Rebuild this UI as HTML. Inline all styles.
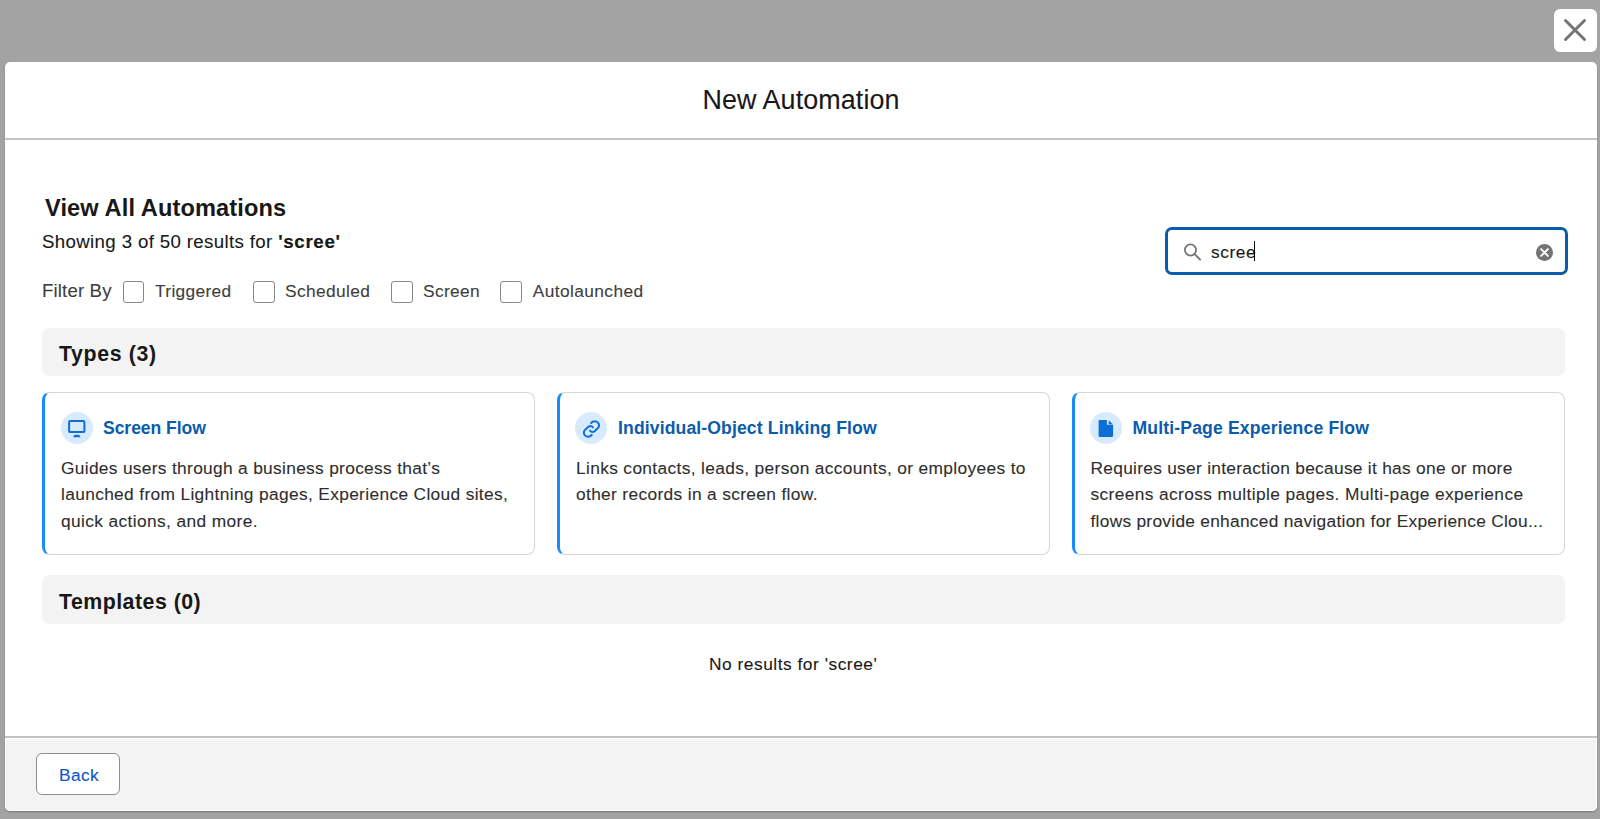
<!DOCTYPE html>
<html><head><meta charset="utf-8">
<style>
*{box-sizing:border-box;margin:0;padding:0}
html,body{width:1600px;height:819px;overflow:hidden;background:#a3a3a3;font-family:"Liberation Sans",sans-serif;color:#181818}
.a{position:absolute;white-space:nowrap;-webkit-text-stroke:.1px currentColor}
b,.bold{-webkit-text-stroke:0 !important}
.close{left:1554px;top:9px;width:43px;height:43px;background:#fff;border-radius:6px}
.modal{left:5px;top:62px;width:1592px;height:749px;background:#fff;border-radius:5px;overflow:hidden;box-shadow:0 1px 1.5px rgba(0,0,0,.28)}
.hline{left:5px;top:138px;width:1592px;height:2px;background:#c3c3c3}
.footer{left:5px;top:736px;width:1592px;height:75px;background:#fff;border-top:2px solid #c3c3c3;border-radius:0 0 5px 5px}
.footer i{position:absolute;left:1px;right:1px;top:1px;bottom:1px;background:#f3f3f3;border-radius:0 0 4px 4px}
.cb{top:281px;width:21.5px;height:21.5px;border:1px solid #888;border-radius:3px;background:#fff}
.lbl{top:278.3px;font-size:17.33px;line-height:26px;color:#3e3e3e;letter-spacing:.37px}
.bar{left:42px;width:1523px;background:#f3f3f3;border-radius:8px}
.bt{left:59px;font-weight:bold;-webkit-text-stroke:0 !important;font-size:21.33px;line-height:30px;color:#181818}
.card{top:392px;width:493px;height:162.5px;border:1px solid #d5d5d5;border-left:3px solid #1b8aff;border-radius:8px;background:#fff}
.ic{top:412px;width:32px;height:32px;border-radius:50%;background:#d8eaff}
.ct{top:414.5px;font-weight:bold;-webkit-text-stroke:0 !important;font-size:17.6px;line-height:26px;color:#0b5cab}
.cd{top:454.7px;font-size:17.33px;line-height:26.67px;color:#2e2e2e;letter-spacing:.36px}
</style></head>
<body>
<div class="a close">
<svg width="43" height="43" viewBox="0 0 43 43" style="display:block"><path d="M11.5 11.5L30.5 30.5M30.5 11.5L11.5 30.5" stroke="#747474" stroke-width="3" stroke-linecap="round"/></svg>
</div>
<div class="a modal"></div>
<div class="a hline"></div>
<div class="a" style="left:5px;width:1592px;top:84.1px;text-align:center;font-size:26.9px;line-height:32px;letter-spacing:.1px">New Automation</div>

<div class="a" style="left:45px;top:192.9px;font-size:23.6px;line-height:30px;font-weight:bold;letter-spacing:.11px;-webkit-text-stroke:0">View All Automations</div>
<div class="a" style="left:42px;top:228.2px;font-size:18.67px;line-height:28px;letter-spacing:.36px">Showing 3 of 50 results for <b style="letter-spacing:.68px;-webkit-text-stroke:.2px currentColor !important">'scree'</b></div>

<div class="a" style="left:42px;top:276.9px;font-size:18.67px;line-height:28px;color:#3e3e3e;letter-spacing:.14px">Filter By</div>
<div class="a cb" style="left:122.8px"></div>
<div class="a lbl" style="left:155px;letter-spacing:.34px">Triggered</div>
<div class="a cb" style="left:253px"></div>
<div class="a lbl" style="left:285px">Scheduled</div>
<div class="a cb" style="left:391px"></div>
<div class="a lbl" style="left:423px">Screen</div>
<div class="a cb" style="left:500px"></div>
<div class="a lbl" style="left:532.8px;letter-spacing:.39px">Autolaunched</div>

<!-- search -->
<div class="a" style="left:1165px;top:227.4px;width:403px;height:47.3px;border:3px solid #0b5cab;border-radius:7px;background:#fff"></div>
<svg class="a" style="left:1180px;top:238.5px" width="26" height="26" viewBox="0 0 26 26"><circle cx="10.5" cy="11" r="5.6" fill="none" stroke="#747474" stroke-width="1.8"/><path d="M14.6 15.1L20.1 20.6" stroke="#747474" stroke-width="1.9" stroke-linecap="round"/></svg>
<div class="a" style="left:1211px;top:238.8px;font-size:17.33px;line-height:26px;letter-spacing:.55px;color:#181818">scree</div>
<div class="a" style="left:1253.6px;top:241.2px;width:1.4px;height:19.7px;background:#000"></div>
<svg class="a" style="left:1534px;top:241.6px" width="21" height="21" viewBox="0 0 21 21"><circle cx="10.5" cy="10.5" r="8.5" fill="#747474"/><path d="M7.1 7.1L13.9 13.9M13.9 7.1L7.1 13.9" stroke="#fff" stroke-width="1.9" stroke-linecap="round"/></svg>

<div class="a bar" style="top:327.5px;height:48.5px"></div>
<div class="a bt" style="top:339.1px;letter-spacing:.62px">Types (3)</div>

<!-- cards -->
<div class="a card" style="left:42px"></div>
<div class="a card" style="left:557px"></div>
<div class="a card" style="left:1072px"></div>

<div class="a ic" style="left:60.6px"></div>
<svg class="a" style="left:60.6px;top:412px" width="32" height="32" viewBox="0 0 32 32"><rect x="8.1" y="8.9" width="15.3" height="11.2" rx="1.2" fill="none" stroke="#0b6fd6" stroke-width="2"/><path d="M12 25.2L13.6 22.8H18L19.6 25.2Z" fill="#0b6fd6"/></svg>
<div class="a ct" style="left:103px;letter-spacing:-.08px">Screen Flow</div>
<div class="a cd" style="left:61px"><span style="letter-spacing:.313px">Guides users through a business process that’s</span><br><span style="letter-spacing:.343px">launched from Lightning pages, Experience Cloud sites,</span><br><span style="letter-spacing:.377px">quick actions, and more.</span></div>

<div class="a ic" style="left:575px"></div>
<svg class="a" style="left:575px;top:411.5px" width="32" height="32" viewBox="0 0 32 32"><g fill="none" stroke="#0b6fd6" stroke-width="2" stroke-linecap="round"><path d="M16.2 11C17.5 9.6 19.5 9 21.3 9.6C23.5 10.3 24.6 12.6 23.8 14.6C23.5 15.4 23 16 22.4 16.6L19.6 19.2C18.3 20.2 16.2 20.2 14.9 18.7"/><path transform="translate(.7 0)" d="M16 23C14.7 24.4 12.7 25 10.9 24.4C8.7 23.7 7.6 21.4 8.4 19.4C8.7 18.6 9.2 18 9.8 17.4L12.6 14.8C13.9 13.8 16 13.8 17.3 15.3"/></g></svg>
<div class="a ct" style="left:618px;letter-spacing:.12px">Individual-Object Linking Flow</div>
<div class="a cd" style="left:576px"><span style="letter-spacing:.35px">Links contacts, leads, person accounts, or employees to</span><br><span style="letter-spacing:.343px">other records in a screen flow.</span></div>

<div class="a ic" style="left:1090.2px"></div>
<svg class="a" style="left:1090.2px;top:412px" width="32" height="32" viewBox="0 0 32 32"><path d="M9.8 7.9H16.9V11.7A1.2 1.2 0 0 0 18.1 12.9H23.1V23.8A1.2 1.2 0 0 1 21.9 25H9.8A1.2 1.2 0 0 1 8.6 23.8V9.1A1.2 1.2 0 0 1 9.8 7.9Z" fill="#0b6fd6"/><path d="M18.7 8.2L23.1 12.4H18.7Z" fill="#0b6fd6"/></svg>
<div class="a ct" style="left:1132.5px;letter-spacing:.15px">Multi-Page Experience Flow</div>
<div class="a cd" style="left:1090.5px"><span style="letter-spacing:.282px">Requires user interaction because it has one or more</span><br><span style="letter-spacing:.38px">screens across multiple pages. Multi-page experience</span><br><span style="letter-spacing:.275px">flows provide enhanced navigation for Experience Clou...</span></div>

<div class="a bar" style="top:575.2px;height:48.7px"></div>
<div class="a bt" style="top:586.6px;letter-spacing:.48px">Templates (0)</div>

<div class="a" style="left:709px;top:650.9px;font-size:17.33px;line-height:26px;letter-spacing:.52px;color:#181818">No results for 'scree'</div>

<div class="a footer"><i></i></div>
<div class="a" style="left:36px;top:753px;width:84px;height:42px;border:1px solid #8f8f8f;border-radius:6px;background:#fff"></div>
<div class="a" style="left:59px;top:761.9px;font-size:17.33px;line-height:26px;letter-spacing:.37px;color:#0b57c8">Back</div>
</body></html>
